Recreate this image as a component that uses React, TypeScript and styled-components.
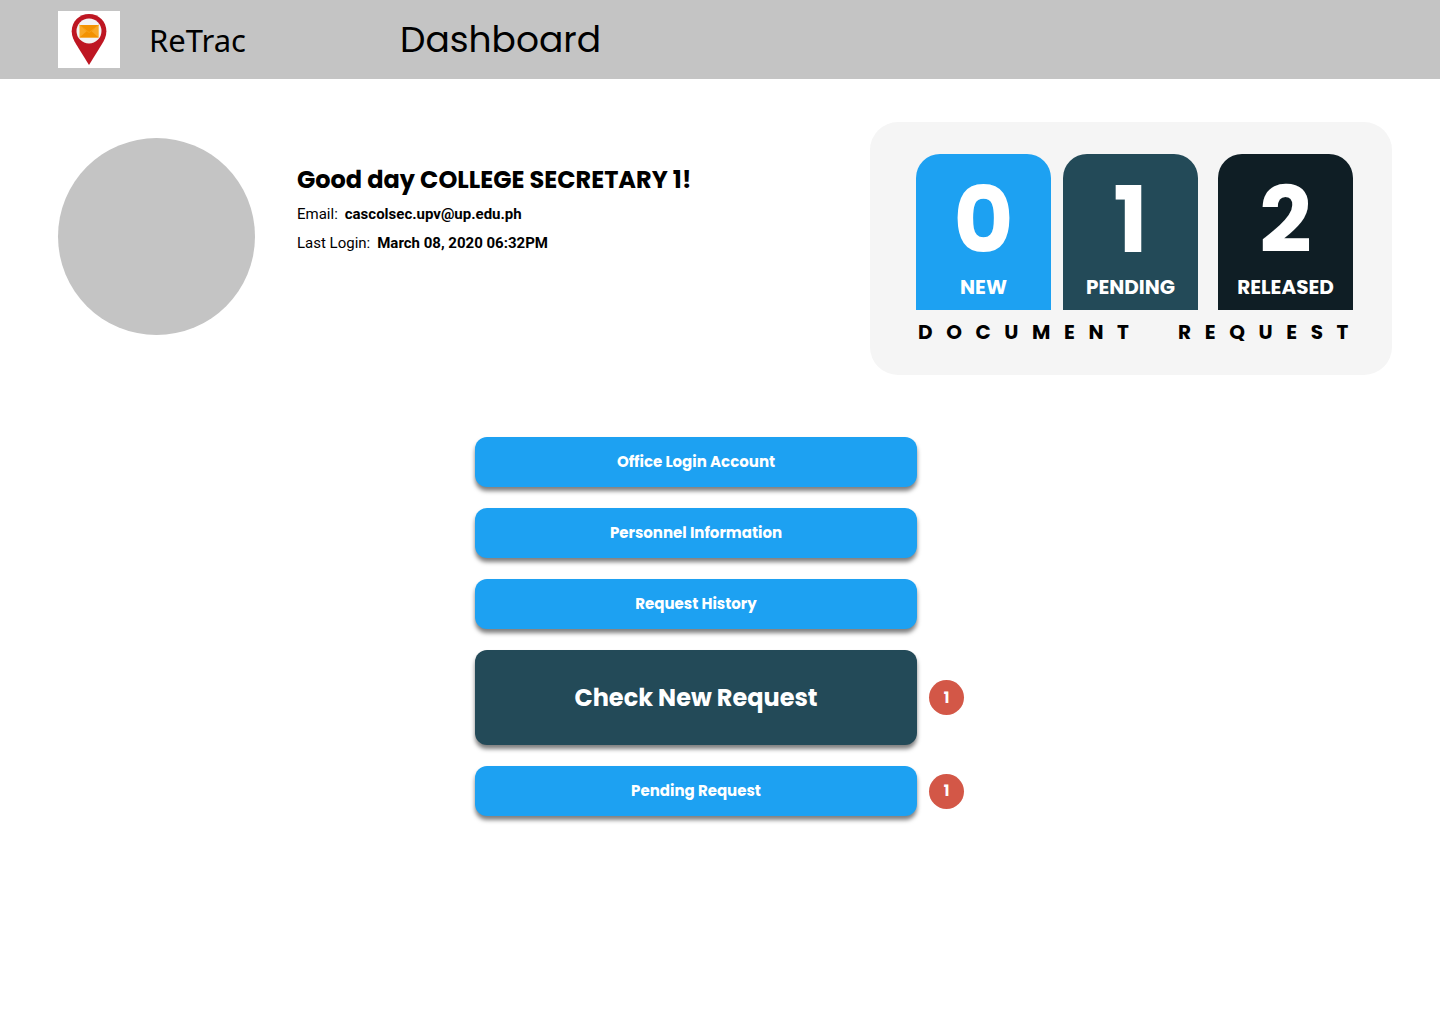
import React from "react";
import styled, { createGlobalStyle } from "styled-components";

const display = `Poppins, Inter, "Open Sans", sans-serif`;

const colors = {
  bar: "#c4c4c4",
  blue: "#1da1f2",
  teal: "#234a58",
  ink: "#0f1e25",
  panel: "#f5f5f5",
  red: "#d35747",
};

const GlobalStyle = createGlobalStyle`
  *, *::before, *::after { box-sizing: border-box; }
  body {
    margin: 0;
    background: #fff;
    color: #000;
    font-family: Roboto, "Liberation Sans", sans-serif;
  }
  h1, h2, p { margin: 0; padding: 0; }
`;

const Header = styled.header`
  display: flex;
  align-items: center;
  padding: 11px 58px;
  background: ${colors.bar};
`;

const Brand = styled.a`
  display: flex;
  align-items: center;
  gap: 29px;
  width: 342px;
  color: inherit;
  text-decoration: none;
`;

const Logo = styled.svg`
  display: block;
  width: 62px;
  height: 57px;
`;

const BrandName = styled.span`
  font: 400 31px/48px "Noto Sans", "Open Sans", sans-serif;
`;

const PageTitle = styled.h1`
  font: 400 36px/56px ${display};
`;

const Main = styled.main`
  padding: 43px 0 48px;
`;

const Overview = styled.section`
  display: flex;
  flex-wrap: wrap;
  align-items: flex-start;
  justify-content: space-between;
  gap: 32px;
  padding: 0 48px 0 58px;
`;

const Profile = styled.div`
  display: flex;
  gap: 42px;
  padding-top: 16px;
`;

const Avatar = styled.div`
  flex: none;
  width: 197px;
  height: 197px;
  border-radius: 50%;
  background: ${colors.bar};
`;

const Details = styled.div`
  padding-top: 24px;
`;

const Greeting = styled.h2`
  margin-bottom: 2px;
  font: 700 24px/36px ${display};
`;

const Fact = styled.p`
  display: flex;
  gap: 7px;
  font-size: 15px;
  line-height: 29px;
`;

const Summary = styled.section`
  padding: 32px 39px 25px 46px;
  border-radius: 28px;
  background: ${colors.panel};
`;

const Tiles = styled.div<{ $gap: number }>`
  display: flex;
  gap: ${(p) => p.$gap}px;
`;

const TileBox = styled.div<{ $color: string }>`
  display: flex;
  flex-direction: column;
  align-items: center;
  width: 135px;
  height: 156px;
  padding-top: 16px;
  border-radius: 24px 24px 0 0;
  background: ${(p) => p.$color};
  color: #fff;
  font-family: ${display};
  font-weight: 700;
`;

const Count = styled.span`
  font-size: 92px;
  line-height: 100px;
`;

const TileLabel = styled.span`
  font-size: 20px;
  line-height: 34px;
`;

const SummaryTitle = styled.h2`
  margin-right: -14px;
  padding: 4px 0 0 2px;
  font: 700 20px/36px ${display};
  letter-spacing: 0.68em;
  white-space: pre;
`;

const Actions = styled.nav`
  display: flex;
  flex-direction: column;
  gap: 21px;
  max-width: 490px;
  margin: 62px auto 0;
`;

const ActionRow = styled.div`
  display: grid;
  grid-template-columns: 1fr 36px;
  align-items: center;
  gap: 12px;
`;

const ActionButton = styled.button<{ $featured?: boolean }>`
  height: ${(p) => (p.$featured ? 95 : 50)}px;
  padding: 0 16px;
  border: 0;
  border-radius: 12px;
  background: ${(p) => (p.$featured ? colors.teal : colors.blue)};
  box-shadow: 0 4px 4px rgba(0, 0, 0, 0.5);
  color: #fff;
  font: 700 ${(p) => (p.$featured ? 24 : 15)}px/1.5 ${display};
  cursor: pointer;
`;

const Badge = styled.span`
  display: grid;
  place-items: center;
  width: 35px;
  height: 35px;
  border-radius: 50%;
  background: ${colors.red};
  color: #fff;
  font: 700 15px/22px ${display};
`;

function PinLogo() {
  return (
    <Logo viewBox="0 0 62 57" role="img" aria-label="ReTrac logo">
      <rect width="62" height="57" fill="#fff" />
      <path
        d="M31 3C21.100 3 13.700 10.700 13.700 20.200c0 5 2.200 9.300 4.600 13.400L31 54l12.700-20.400c2.500-4.100 4.700-8.400 4.700-13.400C48.400 10.700 40.900 3 31 3z"
        fill="#be1622"
      />
      <circle cx="31" cy="20" r="12.500" fill="#f3f3f3" />
      <rect x="21.500" y="14" width="19.200" height="12.500" fill="#f9a826" />
      <path d="M21.500 14h19.200l-7.200 6.200 7.200 6.300H21.500l7.200-6.300z" fill="#f39200" />
      <path d="M21.500 14l9.600 7.500 9.600-7.500" fill="none" stroke="#f7a51c" strokeWidth="0.800" />
    </Logo>
  );
}

function Tile({ count, label, color }: { count: number; label: string; color: string }) {
  return (
    <TileBox $color={color}>
      <Count>{count}</Count>
      <TileLabel>{label}</TileLabel>
    </TileBox>
  );
}

type Action = { label: string; count?: number; featured?: boolean };

const actions: Action[] = [
  { label: "Office Login Account" },
  { label: "Personnel Information" },
  { label: "Request History" },
  { label: "Check New Request", count: 1, featured: true },
  { label: "Pending Request", count: 1 },
];

export default function App() {
  return (
    <>
      <GlobalStyle />
      <Header>
        <Brand href="#">
          <PinLogo />
          <BrandName>ReTrac</BrandName>
        </Brand>
        <PageTitle>Dashboard</PageTitle>
      </Header>
      <Main>
        <Overview>
          <Profile>
            <Avatar />
            <Details>
              <Greeting>Good day COLLEGE SECRETARY 1!</Greeting>
              <Fact>
                Email: <strong>cascolsec.upv@up.edu.ph</strong>
              </Fact>
              <Fact>
                Last Login: <strong>March 08, 2020 06:32PM</strong>
              </Fact>
            </Details>
          </Profile>
          <Summary>
            <Tiles $gap={20}>
              <Tiles $gap={12}>
                <Tile count={0} label="NEW" color={colors.blue} />
                <Tile count={1} label="PENDING" color={colors.teal} />
              </Tiles>
              <Tile count={2} label="RELEASED" color={colors.ink} />
            </Tiles>
            <SummaryTitle>{"DOCUMENT  REQUEST"}</SummaryTitle>
          </Summary>
        </Overview>
        <Actions>
          {actions.map((a) => (
            <ActionRow key={a.label}>
              <ActionButton type="button" $featured={a.featured}>
                {a.label}
              </ActionButton>
              {a.count !== undefined && <Badge>{a.count}</Badge>}
            </ActionRow>
          ))}
        </Actions>
      </Main>
    </>
  );
}
